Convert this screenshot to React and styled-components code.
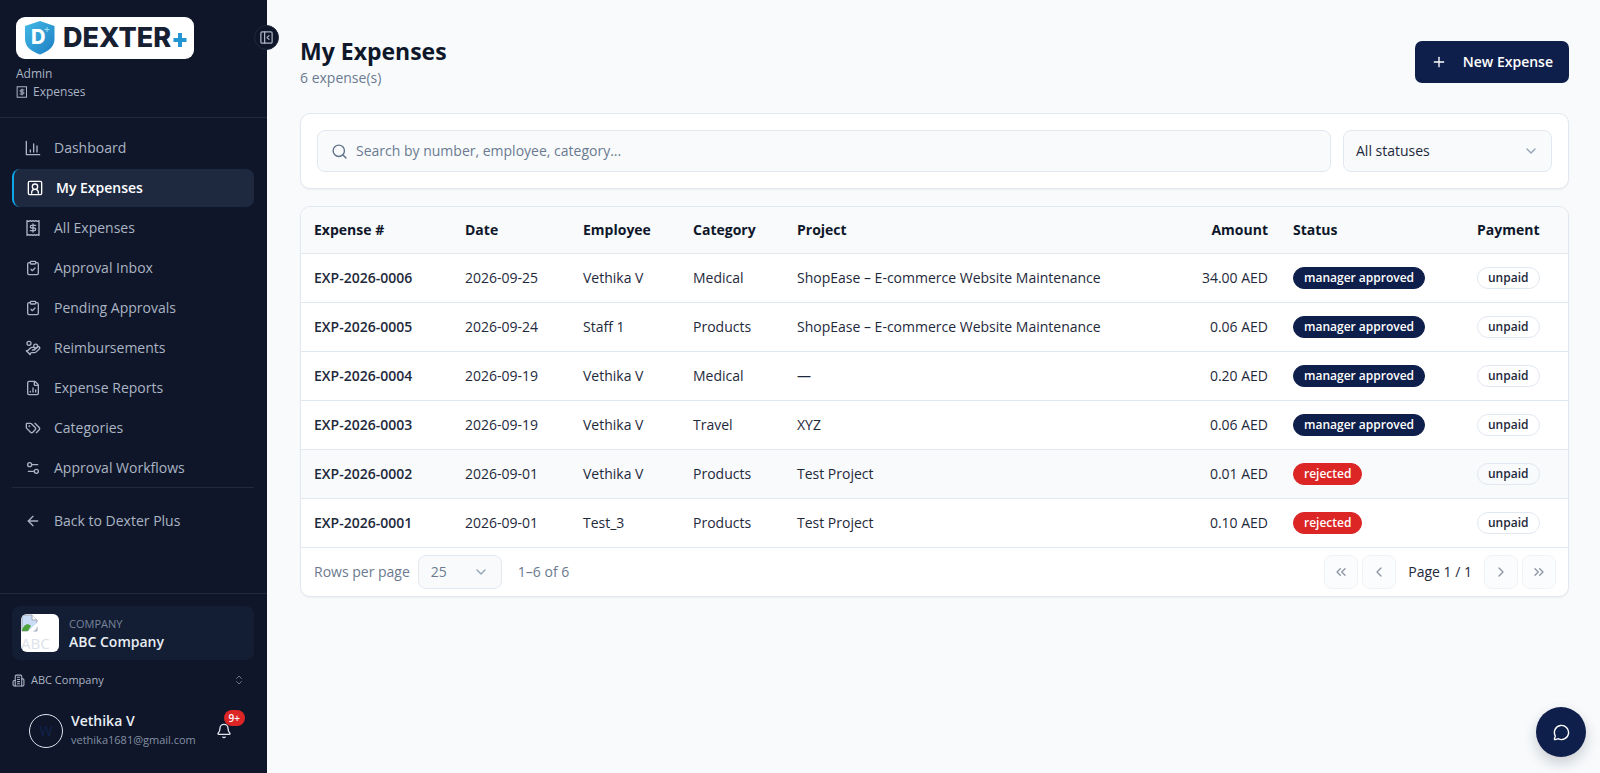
import { useState } from "react";
import styled, { createGlobalStyle } from "styled-components";
import {
  ArrowLeft,
  Bell,
  ChevronDown,
  ChevronLeft,
  ChevronRight,
  ChevronsLeft,
  ChevronsRight,
  ChevronsUpDown,
  ClipboardCheck,
  FileChartColumn,
  HandCoins,
  MessageCircle,
  PanelLeftClose,
  Plus,
  Search,
  Settings2,
} from "lucide-react";

const GlobalStyle = createGlobalStyle`
  * {
    box-sizing: border-box;
  }

  body {
    margin: 0;
    background: #f8fafc;
    color: #1e293b;
    font-family: "Open Sans", "Noto Sans", sans-serif;
    font-size: 14px;
    line-height: 20px;
  }

  h1, p, ul {
    margin: 0;
    padding: 0;
  }

  ul {
    list-style: none;
  }

  a {
    color: inherit;
    text-decoration: none;
  }

  button, input, select {
    font: inherit;
    color: inherit;
  }

  button {
    cursor: pointer;
  }
`;

const Layout = styled.div`
  display: flex;
  min-height: 100vh;
`;

const Sidebar = styled.aside`
  position: relative;
  display: flex;
  flex-direction: column;
  flex: 0 0 267px;
  background: #0f1629;
  color: #aab4c3;
`;

const Brand = styled.div`
  padding: 17px 16px 16px;
  border-bottom: 1px solid #1e293b;
`;

const Logo = styled.svg`
  display: block;
  margin-bottom: 6px;
`;

const BrandLine = styled.p`
  display: flex;
  align-items: center;
  gap: 5px;
  font-size: 12px;
  line-height: 18px;
`;

const Collapse = styled.button`
  position: absolute;
  top: 25px;
  right: -12px;
  display: grid;
  place-items: center;
  width: 25px;
  height: 25px;
  padding: 0;
  border: 1px solid #1e293b;
  border-radius: 50%;
  background: #0f1629;
`;

const Nav = styled.nav`
  flex: 1;
  padding: 11px 13px 0 12px;
`;

const NavList = styled.ul`
  display: grid;
  gap: 2px;
`;

const NavLink = styled.a`
  display: flex;
  align-items: center;
  gap: 13px;
  height: 38px;
  padding: 0 13px;
  border-left: ${({ $active }) => ($active ? "2px solid #0ea5e9" : "0")};
  border-radius: 8px;
  background: ${({ $active }) => ($active ? "#1e293f" : "transparent")};
  color: ${({ $active }) => ($active ? "#fff" : "inherit")};
  font-weight: ${({ $active }) => ($active ? 600 : 400)};
`;

const NavFoot = styled.div`
  padding-top: 14px;
  border-top: 1px solid #1e293b;
`;

const SideFooter = styled.div`
  padding: 12px 13px 23px 12px;
  border-top: 1px solid #1e293b;
`;

const Company = styled.div`
  display: flex;
  align-items: center;
  gap: 10px;
  padding: 8px 9px;
  border-radius: 8px;
  background: #131d33;
`;

const CompanyLogo = styled.div`
  width: 38px;
  height: 38px;
  overflow: hidden;
  border-radius: 6px;
  background: #fff;
  color: #dbe1e9;
  font-size: 15px;
  line-height: 22px;

  svg {
    display: block;
  }
`;

const Caption = styled.p`
  font-size: 11px;
  line-height: 18px;
  color: #77849a;
`;

const Strong = styled.p`
  font-weight: 600;
  line-height: 18px;
  color: #e8edf4;
`;

const Switcher = styled.button`
  display: flex;
  align-items: center;
  gap: 6px;
  width: 100%;
  height: 40px;
  padding: 0 9px 0 0;
  border: 0;
  background: none;
  font-size: 11px;

  svg:last-child {
    margin-left: auto;
    opacity: 0.6;
  }
`;

const User = styled.div`
  display: flex;
  align-items: center;
  gap: 8px;
  padding: 12px 9px 0 17px;
`;

const Avatar = styled.div`
  display: grid;
  place-items: center;
  width: 34px;
  height: 34px;
  border: 1px solid #dfe5ee;
  border-radius: 50%;
  color: #11244f;
`;

const Email = styled.p`
  font-size: 11px;
  line-height: 20px;
  color: #8490a3;
`;

const Notify = styled.button`
  position: relative;
  display: grid;
  place-items: center;
  width: 34px;
  height: 34px;
  margin-left: auto;
  margin-right: 4px;
  padding: 0;
  border: 0;
  background: none;
  color: #e2e8f0;
`;

const Count = styled.span`
  position: absolute;
  top: -4px;
  right: -4px;
  padding: 0 5px;
  border-radius: 8px;
  background: #dc2626;
  color: #fff;
  font-size: 10px;
  font-weight: 600;
  line-height: 16px;
`;

const Main = styled.main`
  flex: 1;
  min-width: 0;
  padding: 35px 31px 32px 33px;
`;

const PageHead = styled.header`
  display: flex;
  align-items: center;
  justify-content: space-between;
  margin-bottom: 25px;
`;

const Title = styled.h1`
  color: #0f172a;
  font-size: 23px;
  font-weight: 700;
  line-height: 32px;
`;

const Muted = styled.p`
  color: #6b7a90;
  line-height: 21px;
`;

const NewButton = styled.button`
  display: flex;
  align-items: center;
  gap: 16px;
  height: 42px;
  padding: 0 16px;
  border: 0;
  border-radius: 7px;
  background: #0f1f4b;
  color: #fff;
  font-weight: 600;
`;

const Card = styled.section`
  border: 1px solid #e2e8f0;
  border-radius: 10px;
  background: #fff;
  box-shadow: 0 1px 2px rgba(15, 23, 42, 0.05);
  overflow: hidden;
`;

const Filters = styled(Card)`
  display: flex;
  gap: 12px;
  margin-bottom: 17px;
  padding: 16px;
`;

const SearchBox = styled.label`
  display: flex;
  align-items: center;
  gap: 8px;
  flex: 1;
  height: 42px;
  padding: 0 13px;
  border: 1px solid #e2e8f0;
  border-radius: 8px;
  background: #f8fafc;
  color: #64748b;
`;

const SearchInput = styled.input`
  flex: 1;
  min-width: 0;
  padding: 0;
  border: 0;
  outline: 0;
  background: none;

  &::placeholder {
    color: #6b7a90;
    opacity: 1;
  }
`;

const SelectWrap = styled.span`
  position: relative;
  display: block;
  width: ${({ $width }) => $width};

  svg {
    position: absolute;
    top: 50%;
    right: 13px;
    margin-top: -8px;
    color: #94a3b8;
    pointer-events: none;
  }
`;

const Select = styled.select`
  display: block;
  width: 100%;
  height: ${({ $small }) => ($small ? "34px" : "42px")};
  padding: 0 12px;
  border: 1px solid #e2e8f0;
  border-radius: 8px;
  background: #f8fafc;
  appearance: none;
`;

const Table = styled.table`
  width: 100%;
  border-collapse: collapse;
  table-layout: fixed;
`;

const Th = styled.th`
  width: ${({ $width }) => $width || "auto"};
  height: 46px;
  padding: 0 ${({ $right }) => ($right ? "13px" : "12px")} 0 12px;
  background: #f8fafc;
  color: #0f172a;
  font-weight: 700;
  text-align: ${({ $right }) => ($right ? "right" : "left")};

  &:first-child {
    padding-left: 13px;
  }
`;

const Row = styled.tr`
  border-top: 1px solid #e2e8f0;
  background: ${({ $hover }) => ($hover ? "#f8fafc" : "#fff")};
`;

const Td = styled.td`
  height: 49px;
  padding: 0 ${({ $right }) => ($right ? "13px" : "12px")} 0 12px;
  font-weight: ${({ $bold }) => ($bold ? 600 : 400)};
  text-align: ${({ $right }) => ($right ? "right" : "left")};
  white-space: nowrap;

  &:first-child {
    padding-left: 13px;
  }
`;

const badgeColors = {
  approved: "#0f1f4b",
  rejected: "#dc2626",
};

const Badge = styled.span`
  display: inline-block;
  padding: 0 10px;
  border: 1px solid ${({ $kind }) => badgeColors[$kind] || "#e2e8f0"};
  border-radius: 11px;
  background: ${({ $kind }) => badgeColors[$kind] || "transparent"};
  color: ${({ $kind }) => (badgeColors[$kind] ? "#fff" : "#1e293b")};
  font-size: 12px;
  font-weight: 600;
  line-height: 20px;
`;

const Pager = styled.footer`
  display: flex;
  align-items: center;
  justify-content: space-between;
  padding: 7px 12px 7px 13px;
  border-top: 1px solid #e2e8f0;
`;

const PagerSide = styled.div`
  display: flex;
  align-items: center;
  gap: ${({ $gap }) => $gap};
  color: ${({ $muted }) => ($muted ? "#6b7a90" : "#1e293b")};
`;

const PageLabel = styled.span`
  padding: 0 8px;
`;

const PageButton = styled.button`
  display: grid;
  place-items: center;
  width: 34px;
  height: 34px;
  padding: 0;
  border: 1px solid #f0f3f7;
  border-radius: 8px;
  background: #fbfcfd;
  color: #8e96a5;
`;

const Chat = styled.button`
  position: fixed;
  right: 14px;
  bottom: 16px;
  display: grid;
  place-items: center;
  width: 50px;
  height: 50px;
  padding: 0;
  border: 0;
  border-radius: 50%;
  background: #0f1f4b;
  color: #fff;
  box-shadow: 0 6px 14px rgba(15, 23, 42, 0.2);
`;

const Icon = ({ size = 16, children }) => (
  <svg
    width={size}
    height={size}
    viewBox="0 0 24 24"
    fill="none"
    stroke="currentColor"
    strokeWidth="2"
    strokeLinecap="round"
    strokeLinejoin="round"
    aria-hidden="true"
  >
    {children}
  </svg>
);

const ChartIcon = (props) => (
  <Icon {...props}>
    <path d="M2 2v20h20M8 18v-3M13 18V6M18 18V9" />
  </Icon>
);

const PersonIcon = (props) => (
  <Icon {...props}>
    <rect x="2" y="2" width="20" height="20" rx="2" />
    <circle cx="12" cy="10" r="4" />
    <path d="M7 20v-1c0-3 2-5 5-5s5 2 5 5v1" />
  </Icon>
);

const ReceiptIcon = (props) => (
  <Icon {...props}>
    <path d="M3 1l3 1 2-1 2 1 2-1 2 1 2-1 2 1 3-1v22l-3-1-2 1-2-1-2 1-2-1-2 1-2-1-3 1z" />
    <path d="M16 8h-6a2 2 0 0 0 0 4h4a2 2 0 0 1 0 4H8M12 6v12" />
  </Icon>
);

const TagsIcon = (props) => (
  <Icon {...props}>
    <path d="m15 5 6.300 6.300a2.400 2.400 0 0 1 0 3.400L17 19" />
    <path d="M9.586 5.586A2 2 0 0 0 8.172 5H3a1 1 0 0 0-1 1v5.172a2 2 0 0 0 .586 1.414L8.290 18.290a2.426 2.426 0 0 0 3.420 0l3.580-3.580a2.426 2.426 0 0 0 0-3.420z" />
    <circle cx="6.500" cy="9.500" r=".5" fill="currentColor" />
  </Icon>
);

const BuildingIcon = (props) => (
  <Icon {...props}>
    <path d="M6 22V4a2 2 0 0 1 2-2h8a2 2 0 0 1 2 2v18z" />
    <path d="M6 12H4a2 2 0 0 0-2 2v6a2 2 0 0 0 2 2h2M18 9h2a2 2 0 0 1 2 2v9a2 2 0 0 1-2 2h-2" />
    <path d="M10 6h4M10 10h4M10 14h4M10 18h4" />
  </Icon>
);

const navItems = [
  { label: "Dashboard", icon: ChartIcon },
  { label: "My Expenses", icon: PersonIcon, active: true },
  { label: "All Expenses", icon: ReceiptIcon },
  { label: "Approval Inbox", icon: ClipboardCheck },
  { label: "Pending Approvals", icon: ClipboardCheck },
  { label: "Reimbursements", icon: HandCoins },
  { label: "Expense Reports", icon: FileChartColumn },
  { label: "Categories", icon: TagsIcon },
  { label: "Approval Workflows", icon: Settings2 },
];

const shop = "ShopEase – E-commerce Website Maintenance";

const expenses = [
  ["EXP-2026-0006", "2026-09-25", "Vethika V", "Medical", shop, "34.00 AED", "approved"],
  ["EXP-2026-0005", "2026-09-24", "Staff 1", "Products", shop, "0.06 AED", "approved"],
  ["EXP-2026-0004", "2026-09-19", "Vethika V", "Medical", "—", "0.20 AED", "approved"],
  ["EXP-2026-0003", "2026-09-19", "Vethika V", "Travel", "XYZ", "0.06 AED", "approved"],
  ["EXP-2026-0002", "2026-09-01", "Vethika V", "Products", "Test Project", "0.01 AED", "rejected"],
  ["EXP-2026-0001", "2026-09-01", "Test_3", "Products", "Test Project", "0.10 AED", "rejected"],
];

const BrandLogo = () => (
  <Logo width="178" height="42" viewBox="0 0 178 42" role="img" aria-label="Dexter+">
    <defs>
      <linearGradient id="shield" x1="0" y1="0" x2="1" y2="1">
        <stop offset="0" stopColor="#43b9e6" />
        <stop offset="1" stopColor="#1c7fc4" />
      </linearGradient>
    </defs>
    <rect width="178" height="42" rx="9" fill="#fff" />
    <path d="M24 4L38.500 9v13c0 8-6 12-14.500 15.500C15 34 9 30 9 22V9z" fill="url(#shield)" />
    <text x="15" y="27" fontFamily="Inter" fontSize="20" fontWeight="800" fill="#fff">D</text>
    <path d="M31 10v5M28.500 12.500h5" stroke="#9fe0f5" strokeWidth="1" />
    <text x="47" y="30" fontFamily="Inter" fontSize="27" fontWeight="800" fill="#172033">DEXTER</text>
    <path d="M164 16v14M157.500 23h13" stroke="#2495d3" strokeWidth="4" />
  </Logo>
);

const SideBar = () => (
  <Sidebar>
    <Brand>
      <BrandLogo />
      <BrandLine>Admin</BrandLine>
      <BrandLine>
        <ReceiptIcon size={12} />
        Expenses
      </BrandLine>
    </Brand>
    <Collapse aria-label="Collapse sidebar">
      <PanelLeftClose size={15} />
    </Collapse>
    <Nav>
      <NavList>
        {navItems.map(({ label, icon: ItemIcon, active }) => (
          <li key={label}>
            <NavLink href="#" $active={active}>
              <ItemIcon size={16} />
              {label}
            </NavLink>
          </li>
        ))}
      </NavList>
      <NavFoot>
        <NavLink href="#">
          <ArrowLeft size={16} />
          Back to Dexter Plus
        </NavLink>
      </NavFoot>
    </Nav>
    <SideFooter>
      <Company>
        <CompanyLogo>
          <svg width="17" height="18" viewBox="0 0 17 18" aria-hidden="true">
            <path d="M1 1h10l5 5v11H1z" fill="#c9dcf5" stroke="#a0a7b1" />
            <path d="M11 1v5h5" fill="#fff" stroke="#a0a7b1" />
            <path d="M1 16c2-6 6-7 9-4l-3 5H1z" fill="#4da43c" />
            <path d="M6 18L17 8v4l-5 6z" fill="#fff" />
          </svg>
          ABC
        </CompanyLogo>
        <div>
          <Caption>COMPANY</Caption>
          <Strong>ABC Company</Strong>
        </div>
      </Company>
      <Switcher>
        <BuildingIcon size={13} />
        ABC Company
        <ChevronsUpDown size={12} />
      </Switcher>
      <User>
        <Avatar>W</Avatar>
        <div>
          <Strong>Vethika V</Strong>
          <Email>vethika1681@gmail.com</Email>
        </div>
        <Notify aria-label="Notifications">
          <Bell size={16} />
          <Count>9+</Count>
        </Notify>
      </User>
    </SideFooter>
  </Sidebar>
);

const ExpenseTable = () => (
  <Table>
    <thead>
      <tr>
        <Th $width="152px">Expense #</Th>
        <Th $width="118px">Date</Th>
        <Th $width="110px">Employee</Th>
        <Th $width="104px">Category</Th>
        <Th>Project</Th>
        <Th $width="110px" $right>Amount</Th>
        <Th $width="184px">Status</Th>
        <Th $width="103px">Payment</Th>
      </tr>
    </thead>
    <tbody>
      {expenses.map(([id, date, employee, category, project, amount, status]) => (
        <Row key={id} $hover={id === "EXP-2026-0002"}>
          <Td $bold>{id}</Td>
          <Td>{date}</Td>
          <Td>{employee}</Td>
          <Td>{category}</Td>
          <Td>{project}</Td>
          <Td $right>{amount}</Td>
          <Td>
            <Badge $kind={status}>{status === "approved" ? "manager approved" : status}</Badge>
          </Td>
          <Td>
            <Badge>unpaid</Badge>
          </Td>
        </Row>
      ))}
    </tbody>
  </Table>
);

export default function App() {
  const [query, setQuery] = useState("");

  return (
    <>
      <GlobalStyle />
      <Layout>
        <SideBar />
        <Main>
          <PageHead>
            <div>
              <Title>My Expenses</Title>
              <Muted>6 expense(s)</Muted>
            </div>
            <NewButton>
              <Plus size={16} />
              New Expense
            </NewButton>
          </PageHead>
          <Filters>
            <SearchBox>
              <Search size={17} />
              <SearchInput
                aria-label="Search expenses"
                placeholder="Search by number, employee, category..."
                value={query}
                onChange={(e) => setQuery(e.target.value)}
              />
            </SearchBox>
            <SelectWrap $width="209px">
              <Select aria-label="Status">
                <option>All statuses</option>
              </Select>
              <ChevronDown size={16} />
            </SelectWrap>
          </Filters>
          <Card>
            <ExpenseTable />
            <Pager>
              <PagerSide $gap="8px" $muted>
                <label htmlFor="rows">Rows per page</label>
                <SelectWrap $width="84px">
                  <Select id="rows" $small>
                    <option>25</option>
                  </Select>
                  <ChevronDown size={16} />
                </SelectWrap>
                <PageLabel>1–6 of 6</PageLabel>
              </PagerSide>
              <PagerSide $gap="4px">
                <PageButton aria-label="First page" disabled>
                  <ChevronsLeft size={16} />
                </PageButton>
                <PageButton aria-label="Previous page" disabled>
                  <ChevronLeft size={16} />
                </PageButton>
                <PageLabel>Page 1 / 1</PageLabel>
                <PageButton aria-label="Next page" disabled>
                  <ChevronRight size={16} />
                </PageButton>
                <PageButton aria-label="Last page" disabled>
                  <ChevronsRight size={16} />
                </PageButton>
              </PagerSide>
            </Pager>
          </Card>
        </Main>
      </Layout>
      <Chat aria-label="Open chat">
        <MessageCircle size={17} />
      </Chat>
    </>
  );
}
